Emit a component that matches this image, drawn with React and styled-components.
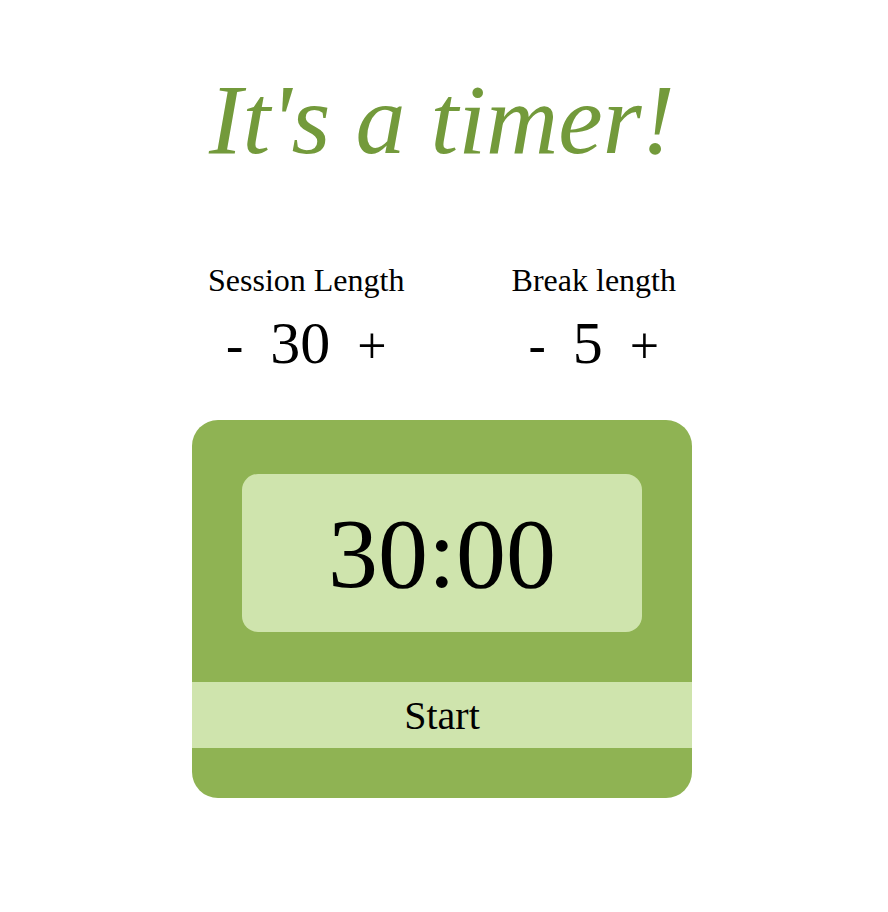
import React from 'react'
import styled, { createGlobalStyle } from 'styled-components'

const GlobalStyle = createGlobalStyle`
    body {
        margin: 0;
        background: #ffffff;
        font-family: 'Liberation Serif', 'Times New Roman', serif;
        color: #000000;
    }
`

const StyledPage = styled.div`
    display: flex;
    flex-direction: column;
    align-items: center;
    padding: 65px 4px 0 0;
`

const StyledTitle = styled.h1`
    margin: 0;
    font-size: 100px;
    font-style: italic;
    font-weight: normal;
    line-height: 110px;
    color: #739a3b;
`

const StyledSettings = styled.div`
    display: flex;
    justify-content: space-between;
    width: 468px;
    margin-top: 87px;
`

const StyledSetting = styled.div`
    display: flex;
    flex-direction: column;
    align-items: center;
`

const StyledLabel = styled.div`
    font-size: 32px;
    line-height: 36px;
`

const StyledCounter = styled.div`
    display: flex;
    align-items: baseline;
    gap: 27px;
    margin-top: 13px;
`

const StyledStep = styled.button`
    background: transparent;
    border: 0;
    padding: 0;
    font-family: inherit;
    font-size: 52px;
    color: #000000;
    cursor: pointer;
`

const StyledValue = styled.span`
    font-size: 60px;
    line-height: 64px;
`

const StyledCard = styled.div`
    display: flex;
    flex-direction: column;
    width: 500px;
    margin-top: 45px;
    padding: 54px 0 50px;
    box-sizing: border-box;
    background: #8fb353;
    border-radius: 26px;
    overflow: hidden;
`

const StyledDisplay = styled.div`
    display: flex;
    align-items: center;
    justify-content: center;
    align-self: center;
    width: 400px;
    height: 158px;
    background: #cfe4ad;
    border-radius: 16px;
    font-size: 100px;
`

const StyledStart = styled.button`
    margin-top: 50px;
    height: 66px;
    border: 0;
    padding: 0;
    background: #cfe4ad;
    font-family: inherit;
    font-size: 40px;
    color: #000000;
    cursor: pointer;
`

const Setting = ({ label, value, setValue }) => (
    <StyledSetting>
        <StyledLabel>{label}</StyledLabel>
        <StyledCounter>
            <StyledStep onClick={() => setValue(Math.max(1, value - 1))}>-</StyledStep>
            <StyledValue>{value}</StyledValue>
            <StyledStep onClick={() => setValue(value + 1)}>+</StyledStep>
        </StyledCounter>
    </StyledSetting>
)

export default function App() {
    const [session, setSession] = React.useState(30)
    const [rest, setRest] = React.useState(5)

    return (
        <>
            <GlobalStyle />
            <StyledPage>
                <StyledTitle>It's a timer!</StyledTitle>
                <StyledSettings>
                    <Setting label="Session Length" value={session} setValue={setSession} />
                    <Setting label="Break length" value={rest} setValue={setRest} />
                </StyledSettings>
                <StyledCard>
                    <StyledDisplay>{String(session).padStart(2, '0')}:00</StyledDisplay>
                    <StyledStart>Start</StyledStart>
                </StyledCard>
            </StyledPage>
        </>
    )
}
